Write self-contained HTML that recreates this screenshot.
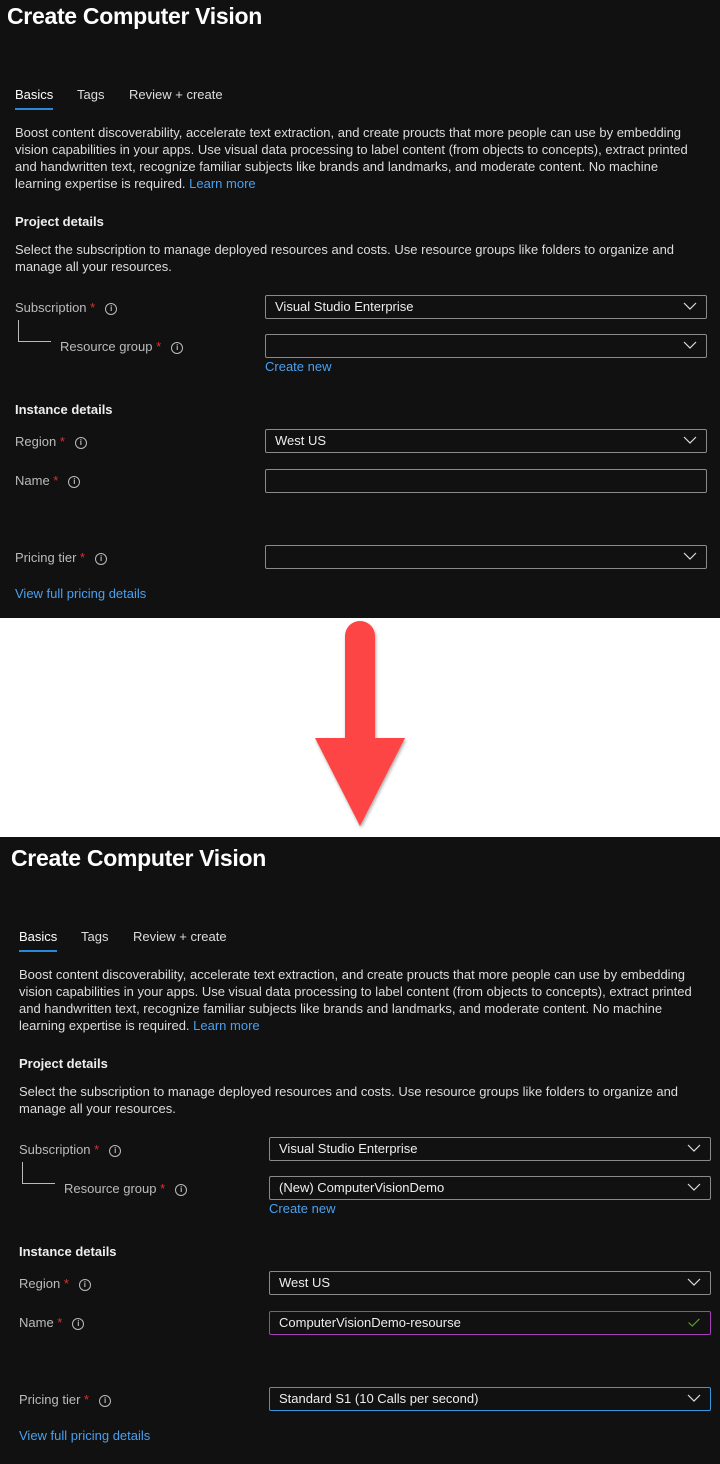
<!DOCTYPE html>
<html><head><meta charset="utf-8"><style>
*{margin:0;padding:0;box-sizing:border-box}
body{width:720px;height:1464px;background:#111;font-family:"Liberation Sans",sans-serif;color:#ddd;position:relative;overflow:hidden}
.p{position:absolute;left:0;width:720px;height:620px}
.a{position:absolute;white-space:nowrap;font-size:13px;line-height:17px}
.h{font-size:23px;line-height:30px;color:#fff;font-weight:bold;letter-spacing:-0.3px}
.b{font-weight:bold;color:#eee}
.l{color:#4aa0f0}
.lab{color:#bbb}
.s{color:#e03030}
.i{display:inline-block;width:12px;height:12px;border:1px solid #bbb;border-radius:50%;font-size:8px;line-height:10px;text-align:center;vertical-align:middle;margin-left:10px;color:#bbb;font-weight:bold}
.box{position:absolute;left:265px;width:442px;height:24px;border:1px solid #8a8a8a;border-radius:2px;font-size:13px;line-height:22px;padding-left:9px;color:#eee}
.chev{position:absolute;right:9px;top:6px;width:14px;height:9px}
</style></head><body>
<div style="position:absolute;left:0;top:618px;width:720px;height:219px;background:#fff"></div>
<svg style="position:absolute;left:0;top:618px" width="720" height="219">
<defs><filter id="sh"><feDropShadow dx="1" dy="2" stdDeviation="1.5" flood-color="#000" flood-opacity="0.35"/></filter></defs>
<g filter="url(#sh)" fill="#fd4444">
<path d="M345 18 A15 15 0 0 1 375 18 L375 120 L405 120 L360 208 L315 120 L345 120 Z"/>
</g></svg>

<div class="p" style="top:0">
<div class="a h" style="left:7px;top:1px">Create Computer Vision</div>
<div class="a" style="left:15px;top:86px;color:#fff">Basics</div>
<div style="position:absolute;left:15px;top:108px;width:38px;height:2px;background:#2b88d8"></div>
<div class="a" style="left:77px;top:86px">Tags</div>
<div class="a" style="left:129px;top:86px">Review + create</div>
<div class="a" style="left:15px;top:124px">Boost content discoverability, accelerate text extraction, and create proucts that more people can use by embedding<br>vision capabilities in your apps. Use visual data processing to label content (from objects to concepts), extract printed<br>and handwritten text, recognize familiar subjects like brands and landmarks, and moderate content. No machine<br>learning expertise is required. <span class="l">Learn more</span></div>
<div class="a b" style="left:15px;top:213px">Project details</div>
<div class="a" style="left:15px;top:241px">Select the subscription to manage deployed resources and costs. Use resource groups like folders to organize and<br>manage all your resources.</div>
<div class="a lab" style="left:15px;top:299px">Subscription <span class="s">*</span><span class="i">i</span></div>
<div style="position:absolute;left:18px;top:320px;width:33px;height:22px;border-left:1px solid #bbb;border-bottom:1px solid #bbb"></div>
<div class="a lab" style="left:60px;top:338px">Resource group <span class="s">*</span><span class="i">i</span></div>
<div class="box" style="top:295px">Visual Studio Enterprise<svg class="chev" viewBox="0 0 14 9"><path d="M1 1l6 6 6-6" stroke="#ddd" fill="none" stroke-width="1.2"/></svg></div>
<div class="box" style="top:334px"><svg class="chev" viewBox="0 0 14 9"><path d="M1 1l6 6 6-6" stroke="#ddd" fill="none" stroke-width="1.2"/></svg></div>
<div class="a l" style="left:265px;top:358px">Create new</div>
<div class="a b" style="left:15px;top:401px">Instance details</div>
<div class="a lab" style="left:15px;top:433px">Region <span class="s">*</span><span class="i">i</span></div>
<div class="box" style="top:429px">West US<svg class="chev" viewBox="0 0 14 9"><path d="M1 1l6 6 6-6" stroke="#ddd" fill="none" stroke-width="1.2"/></svg></div>
<div class="a lab" style="left:15px;top:472px">Name <span class="s">*</span><span class="i">i</span></div>
<div class="box" style="top:469px"></div>
<div class="a lab" style="left:15px;top:549px">Pricing tier <span class="s">*</span><span class="i">i</span></div>
<div class="box" style="top:545px"><svg class="chev" viewBox="0 0 14 9"><path d="M1 1l6 6 6-6" stroke="#ddd" fill="none" stroke-width="1.2"/></svg></div>
<div class="a l" style="left:15px;top:585px">View full pricing details</div>
</div>

<div class="p" style="top:842px;left:4px">
<div class="a h" style="left:7px;top:1px">Create Computer Vision</div>
<div class="a" style="left:15px;top:86px;color:#fff">Basics</div>
<div style="position:absolute;left:15px;top:108px;width:38px;height:2px;background:#2b88d8"></div>
<div class="a" style="left:77px;top:86px">Tags</div>
<div class="a" style="left:129px;top:86px">Review + create</div>
<div class="a" style="left:15px;top:124px">Boost content discoverability, accelerate text extraction, and create proucts that more people can use by embedding<br>vision capabilities in your apps. Use visual data processing to label content (from objects to concepts), extract printed<br>and handwritten text, recognize familiar subjects like brands and landmarks, and moderate content. No machine<br>learning expertise is required. <span class="l">Learn more</span></div>
<div class="a b" style="left:15px;top:213px">Project details</div>
<div class="a" style="left:15px;top:241px">Select the subscription to manage deployed resources and costs. Use resource groups like folders to organize and<br>manage all your resources.</div>
<div class="a lab" style="left:15px;top:299px">Subscription <span class="s">*</span><span class="i">i</span></div>
<div style="position:absolute;left:18px;top:320px;width:33px;height:22px;border-left:1px solid #bbb;border-bottom:1px solid #bbb"></div>
<div class="a lab" style="left:60px;top:338px">Resource group <span class="s">*</span><span class="i">i</span></div>
<div class="box" style="top:295px">Visual Studio Enterprise<svg class="chev" viewBox="0 0 14 9"><path d="M1 1l6 6 6-6" stroke="#ddd" fill="none" stroke-width="1.2"/></svg></div>
<div class="box" style="top:334px">(New) ComputerVisionDemo<svg class="chev" viewBox="0 0 14 9"><path d="M1 1l6 6 6-6" stroke="#ddd" fill="none" stroke-width="1.2"/></svg></div>
<div class="a l" style="left:265px;top:358px">Create new</div>
<div class="a b" style="left:15px;top:401px">Instance details</div>
<div class="a lab" style="left:15px;top:433px">Region <span class="s">*</span><span class="i">i</span></div>
<div class="box" style="top:429px">West US<svg class="chev" viewBox="0 0 14 9"><path d="M1 1l6 6 6-6" stroke="#ddd" fill="none" stroke-width="1.2"/></svg></div>
<div class="a lab" style="left:15px;top:472px">Name <span class="s">*</span><span class="i">i</span></div>
<div class="box" style="top:469px;border-color:#a33fb8">ComputerVisionDemo-resourse<svg class="chev" viewBox="0 0 14 10"><path d="M1 5l4 4 8-8" stroke="#5a9e2a" fill="none" stroke-width="1.3"/></svg></div>
<div class="a lab" style="left:15px;top:549px">Pricing tier <span class="s">*</span><span class="i">i</span></div>
<div class="box" style="top:545px;border-color:#3a96dd">Standard S1 (10 Calls per second)<svg class="chev" viewBox="0 0 14 9"><path d="M1 1l6 6 6-6" stroke="#ddd" fill="none" stroke-width="1.2"/></svg></div>
<div class="a l" style="left:15px;top:585px">View full pricing details</div>
</div>
</body></html>
